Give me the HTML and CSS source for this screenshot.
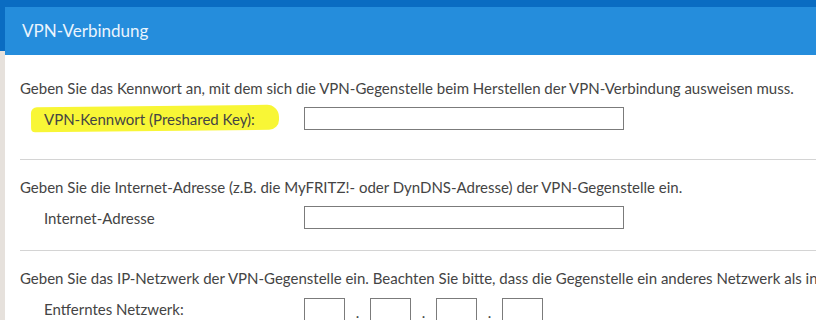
FILE: index.html
```html
<!DOCTYPE html>
<html lang="de">
<head>
    <meta charset="UTF-8">
    <meta name="viewport" content="width=device-width, initial-scale=1.0">
    <title>VPN-Verbindung</title>
    <link rel="stylesheet" href="styles.css">
</head>
<body>
    <div class="topbar"></div>
    <div class="main">
        <div class="nav-edge"></div>
        <div class="content">
            <h1 class="page-title">VPN-Verbindung</h1>

            <div class="form-body">
                <div class="section first">
                    <p class="hint">Geben Sie das Kennwort an, mit dem sich die VPN-Gegenstelle beim Herstellen der VPN-Verbindung ausweisen muss.</p>
                    <div class="field-row">
                        <label class="field-label marked" for="psk">VPN-Kennwort (Preshared Key):</label>
                        <input class="text-input" id="psk" type="text">
                    </div>
                </div>

                <div class="section">
                    <p class="hint">Geben Sie die Internet-Adresse (z.B. die MyFRITZ!- oder DynDNS-Adresse) der VPN-Gegenstelle ein.</p>
                    <div class="field-row">
                        <label class="field-label" for="host">Internet-Adresse</label>
                        <input class="text-input" id="host" type="text">
                    </div>
                </div>

                <div class="section">
                    <p class="hint">Geben Sie das IP-Netzwerk der VPN-Gegenstelle ein. Beachten Sie bitte, dass die Gegenstelle ein anderes Netzwerk als in</p>
                    <div class="field-row">
                        <label class="field-label" for="net1">Entferntes Netzwerk:</label>
                        <div class="ip-group">
                            <input class="octet" id="net1" type="text">
                            <span class="ip-dot">.</span>
                            <input class="octet" type="text">
                            <span class="ip-dot">.</span>
                            <input class="octet" type="text">
                            <span class="ip-dot">.</span>
                            <input class="octet" type="text">
                        </div>
                    </div>
                </div>
            </div>
        </div>
    </div>
</body>
</html>
```

FILE: styles.css
```css
html, body {
    margin: 0;
    padding: 0;
    background-color: #fff;
    overflow: hidden;
}
body {
    font-family: Lato, "Open Sans", Arial, sans-serif;
    font-size: 15px;
    color: #444;
}
.topbar {
    height: 7px;
    background-color: #0a6cc2;
}
.main {
    display: flex;
}
.nav-edge {
    width: 5px;
    flex-shrink: 0;
    background: linear-gradient(to bottom, #0a6cc2 0, #0a6cc2 44px, #e6e1dc 44px);
    min-height: 313px;
}
.content {
    flex: 1;
    min-width: 0;
}
.page-title {
    margin: 0;
    height: 48px;
    line-height: 48px;
    padding-left: 17px;
    background-color: #258ddc;
    color: #eaf4fd;
    font-size: 17px;
    font-weight: normal;
}
.form-body {
    padding-left: 15px;
}
.section {
    padding: 17px 0 21px;
    border-bottom: 1px solid #d4d4d4;
}
.section.first {
    padding-top: 23px;
    padding-bottom: 29px;
}
.section:last-child {
    padding-bottom: 0;
    border-bottom: none;
}
.hint {
    margin: 0;
    line-height: 20px;
    white-space: nowrap;
}
.field-row {
    display: flex;
    align-items: center;
    margin-top: 9px;
    padding-left: 24px;
}
.field-label {
    width: 260px;
    flex-shrink: 0;
    line-height: 20px;
}
.field-label.marked {
    position: relative;
    z-index: 0;
}
.field-label.marked::before {
    content: "";
    position: absolute;
    z-index: -1;
    left: -13px;
    top: -3px;
    width: 248px;
    height: 25px;
    background-color: #f8f636;
    border-radius: 6px 12px 10px 4px;
    transform: rotate(-0.6deg);
}
.text-input,
.octet {
    box-sizing: border-box;
    height: 23px;
    margin: 0;
    padding: 0 4px;
    border: 1px solid #7b7b7b;
    background: #fff;
    font: inherit;
}
.text-input {
    width: 320px;
}
.ip-group {
    display: flex;
    align-items: center;
}
.octet {
    width: 41px;
}
.ip-dot {
    width: 25px;
    text-align: center;
    padding-top: 6px;
}
```
